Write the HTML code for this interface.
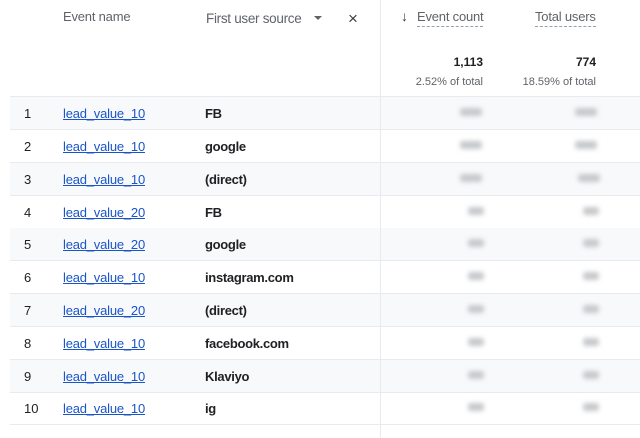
<!DOCTYPE html>
<html><head><style>
body{margin:0;width:640px;height:438px;background:#fff;font-family:"Liberation Sans",Arial,sans-serif;position:relative;overflow:hidden;color:#202124}
.a{position:absolute}
.h{font-size:13px;color:#5f6368;letter-spacing:-0.2px}
.row{position:absolute;left:10px;width:630px;height:32px;border-bottom:1px solid #e8eaed}
.row.g{background:#f8f9fa}
.n{position:absolute;left:14px;top:9px;font-size:13px}
.l{position:absolute;left:53px;top:9px;font-size:13px;color:#1a54c9;text-decoration:underline;letter-spacing:-0.2px}
.s{position:absolute;left:195px;top:9px;font-size:13px;font-weight:bold;letter-spacing:-0.3px}
.b{position:absolute;top:11px;width:22px;height:8px;background:#c6c8cb;filter:blur(2.5px);border-radius:3px}
</style></head><body>
<div class="a h" style="left:63px;top:9px">Event name</div>
<div class="a h" style="left:206px;top:11px;font-size:13.5px;letter-spacing:-0.3px">First user source</div>
<div class="a" style="left:314px;top:16px;width:0;height:0;border-left:4px solid transparent;border-right:4px solid transparent;border-top:4px solid #5f6368"></div>
<div class="a" style="left:348px;top:9px;font-size:17px;color:#3c4043">×</div>
<div class="a h" style="left:401px;top:8px;color:#3c4043;font-size:14px">↓</div>
<div class="a h" style="left:417px;top:9px;border-bottom:1px dashed #9aa0a6;padding-bottom:2px">Event count</div>
<div class="a h" style="left:535px;top:9px;border-bottom:1px dashed #9aa0a6;padding-bottom:2px">Total users</div>
<div class="a" style="left:380px;top:0;width:1px;height:438px;background:#e8eaed;z-index:2"></div>
<div class="a" style="right:157px;top:55px;font-size:12px;font-weight:bold">1,113</div>
<div class="a" style="right:44px;top:55px;font-size:12px;font-weight:bold">774</div>
<div class="a" style="right:157px;top:76px;font-size:11px;color:#5f6368">2.52% of total</div>
<div class="a" style="right:44px;top:76px;font-size:11px;color:#5f6368">18.59% of total</div>
<div class="a" style="left:10px;top:96px;width:630px;height:1px;background:#e8eaed"></div>

<div class="row g" style="top:97px"><span class="n">1</span><span class="l">lead_value_10</span><span class="s">FB</span><i class="b" style="left:450px"></i><i class="b" style="left:565px"></i></div>
<div class="row" style="top:130px"><span class="n">2</span><span class="l">lead_value_10</span><span class="s">google</span><i class="b" style="left:450px"></i><i class="b" style="left:565px"></i></div>
<div class="row g" style="top:163px"><span class="n">3</span><span class="l">lead_value_10</span><span class="s">(direct)</span><i class="b" style="left:450px"></i><i class="b" style="left:568px"></i></div>
<div class="row" style="top:196px"><span class="n">4</span><span class="l">lead_value_20</span><span class="s">FB</span><i class="b" style="left:458px;width:16px"></i><i class="b" style="left:573px;width:16px"></i></div>
<div class="row g" style="top:228px"><span class="n">5</span><span class="l">lead_value_20</span><span class="s">google</span><i class="b" style="left:458px;width:16px"></i><i class="b" style="left:573px;width:16px"></i></div>
<div class="row" style="top:261px"><span class="n">6</span><span class="l">lead_value_10</span><span class="s">instagram.com</span><i class="b" style="left:458px;width:16px"></i><i class="b" style="left:573px;width:16px"></i></div>
<div class="row g" style="top:294px"><span class="n">7</span><span class="l">lead_value_20</span><span class="s">(direct)</span><i class="b" style="left:458px;width:16px"></i><i class="b" style="left:573px;width:16px"></i></div>
<div class="row" style="top:327px"><span class="n">8</span><span class="l">lead_value_10</span><span class="s">facebook.com</span><i class="b" style="left:458px;width:16px"></i><i class="b" style="left:573px;width:16px"></i></div>
<div class="row g" style="top:360px"><span class="n">9</span><span class="l">lead_value_10</span><span class="s">Klaviyo</span><i class="b" style="left:458px;width:16px"></i><i class="b" style="left:573px;width:16px"></i></div>
<div class="row" style="top:392px"><span class="n">10</span><span class="l">lead_value_10</span><span class="s">ig</span><i class="b" style="left:458px;width:16px"></i><i class="b" style="left:573px;width:16px"></i></div>
</body></html>
